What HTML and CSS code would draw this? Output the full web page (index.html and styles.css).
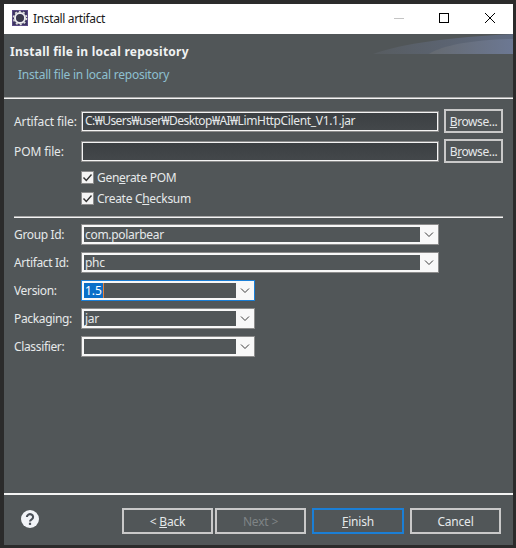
FILE: index.html
```html
<!DOCTYPE html>
<html lang="en">
<head>
    <meta charset="UTF-8">
    <meta name="viewport" content="width=device-width, initial-scale=1.0">
    <title>Install artifact</title>
    <link rel="stylesheet" href="styles.css">
</head>
<body>

    <div class="window">
        <div class="titlebar">
            <svg class="app-icon" width="16" height="16" viewBox="0 0 16 16">
                <rect width="16" height="16" fill="#5b4a86"/>
                <rect x="1" y="1" width="14" height="14" fill="#3c3560"/>
                <circle cx="8" cy="8" r="5" fill="none" stroke="#eeeeee" stroke-width="2"/>
                <circle cx="8" cy="8" r="6.5" fill="none" stroke="#dddddd" stroke-width="1.6" stroke-dasharray="2 2.1"/>
                <circle cx="8" cy="8" r="3.6" fill="#3a3a4a"/>
            </svg>
            <span class="title">Install artifact</span>
            <div class="win-controls">
                <svg width="46" height="30" viewBox="0 0 46 30"><path d="M19 15.500h10" stroke="#c4c4c4" fill="none"/></svg>
                <svg width="46" height="30" viewBox="0 0 46 30"><rect x="18.500" y="10.500" width="9" height="9" stroke="#000" fill="none"/></svg>
                <svg width="46" height="30" viewBox="0 0 46 30"><path d="M18 10l10 10M28 10l-10 10" stroke="#000" fill="none"/></svg>
            </div>
        </div>

        <div class="banner">
            <svg class="banner-art" width="140" height="20" viewBox="0 0 140 20">
                <defs>
                    <linearGradient id="fade1" x1="0" x2="1" y1="0" y2="0">
                        <stop offset="0" stop-color="#575c60"/>
                        <stop offset="1" stop-color="#5f6a80"/>
                    </linearGradient>
                    <linearGradient id="fade2" x1="0" x2="1" y1="0" y2="0">
                        <stop offset="0" stop-color="#656a70"/>
                        <stop offset="1" stop-color="#6c7893"/>
                    </linearGradient>
                </defs>
                <path d="M0 20C30 9 80 3 140 0V20Z" fill="url(#fade1)"/>
                <path d="M56 20C70 11 100 6 140 5V20Z" fill="url(#fade2)"/>
            </svg>
            <h1>Install file in local repository</h1>
            <p>Install file in local repository</p>
        </div>
        <div class="rule"></div>

        <div class="form">
            <div class="file-rows">
                <label>Artifact file:</label>
                <div class="input"><span class="file-dir">C:₩Users₩user₩Desktop₩AI₩</span><span class="file-name">LimHttpCilent_V1.1.jar</span></div>
                <div class="btn btn-browse"><span><u>B</u>rowse...</span></div>
                <label>POM file:</label>
                <div class="input"></div>
                <div class="btn btn-browse"><span>B<u>r</u>owse...</span></div>
            </div>

            <div class="checks">
                <div class="check">
                    <svg class="box" width="13" height="13" viewBox="0 0 13 13">
                        <rect x="0.500" y="0.500" width="12" height="12" fill="#f4f4f4" stroke="#8c8c8c"/>
                        <path d="M2.500 6.500l2.800 3 5.200-6" fill="none" stroke="#333" stroke-width="1.400"/>
                    </svg>
                    <span>Gen<u>e</u>rate POM</span>
                </div>
                <div class="check">
                    <svg class="box" width="13" height="13" viewBox="0 0 13 13">
                        <rect x="0.500" y="0.500" width="12" height="12" fill="#f4f4f4" stroke="#8c8c8c"/>
                        <path d="M2.500 6.500l2.800 3 5.200-6" fill="none" stroke="#333" stroke-width="1.400"/>
                    </svg>
                    <span>Create C<u>h</u>ecksum</span>
                </div>
            </div>

            <div class="rule rule-mid"></div>

            <div class="combo-rows">
                <label>Group Id:</label>
                <div class="combo combo-wide">
                    <span class="combo-text">com.polarbear</span>
                    <svg class="chevron" width="18" height="15" viewBox="0 0 18 15"><path d="M5 5.500l4 4 4-4" fill="none" stroke="#3c3c3c"/></svg>
                </div>
                <label>Artifact Id:</label>
                <div class="combo combo-wide">
                    <span class="combo-text">phc</span>
                    <svg class="chevron" width="18" height="15" viewBox="0 0 18 15"><path d="M5 5.500l4 4 4-4" fill="none" stroke="#3c3c3c"/></svg>
                </div>
                <label>Version:</label>
                <div class="combo combo-focus">
                    <span class="combo-text"><span class="selected">1.5</span></span>
                    <svg class="chevron" width="18" height="15" viewBox="0 0 18 15"><path d="M5 5.500l4 4 4-4" fill="none" stroke="#3c3c3c"/></svg>
                </div>
                <label>Packaging:</label>
                <div class="combo">
                    <span class="combo-text">jar</span>
                    <svg class="chevron" width="18" height="15" viewBox="0 0 18 15"><path d="M5 5.500l4 4 4-4" fill="none" stroke="#3c3c3c"/></svg>
                </div>
                <label>Classifier:</label>
                <div class="combo">
                    <span class="combo-text"></span>
                    <svg class="chevron" width="18" height="15" viewBox="0 0 18 15"><path d="M5 5.500l4 4 4-4" fill="none" stroke="#3c3c3c"/></svg>
                </div>
            </div>
        </div>

        <div class="rule rule-bottom"></div>

        <div class="footer">
            <svg class="help" width="18" height="18" viewBox="0 0 18 18">
                <circle cx="9" cy="9" r="9" fill="#f2f4f8"/>
                <path d="M5.900 7a3.100 2.800 0 1 1 4.800 2.300c-1.100.7-1.700 1.200-1.700 2.200" fill="none" stroke="#4a5058" stroke-width="2.100"/>
                <rect x="7.900" y="12.700" width="2.200" height="2.200" fill="#4a5058"/>
            </svg>
            <div class="buttons">
                <div class="btn btn-nav"><span>&lt; <u>B</u>ack</span></div>
                <div class="btn btn-nav btn-disabled"><span>Next &gt;</span></div>
                <div class="btn btn-nav btn-default"><span><u>F</u>inish</span></div>
                <div class="btn btn-nav"><span>Cancel</span></div>
            </div>
        </div>
    </div>

</body>
</html>
```

FILE: styles.css
```css
html, body {
    margin: 0;
    height: 548px;
    overflow: hidden;
}
body {
    background-color: #2b2b2b;
    font-family: "Noto Sans", "Open Sans", sans-serif;
    font-size: 12px;
    color: #e6e9ea;
}
.window {
    box-sizing: border-box;
    width: 509px;
    height: 541px;
    margin: 4px 0 0 4px;
    background-color: #515658;
    display: flex;
    flex-direction: column;
}
.titlebar {
    box-sizing: border-box;
    height: 30px;
    padding-bottom: 2px;
    flex: none;
    background-color: #ffffff;
    color: #1a1a1a;
    display: flex;
    align-items: center;
}
.app-icon {
    margin-left: 8px;
}
.title {
    margin-left: 5px;
    letter-spacing: -0.35px;
}
.win-controls {
    margin-left: auto;
    display: flex;
}
.banner {
    position: relative;
    height: 63px;
    flex: none;
    box-sizing: border-box;
    padding: 9px 0 0 6px;
}
.banner h1 {
    margin: 0;
    font-size: 12px;
    line-height: 17px;
    font-weight: bold;
    letter-spacing: 0.25px;
    color: #f0f2f2;
}
.banner p {
    margin: 6px 0 0 8px;
    line-height: 17px;
    letter-spacing: -0.22px;
    color: #8ec0d0;
}
.banner-art {
    position: absolute;
    top: 0;
    right: 0;
}
.rule {
    flex: none;
    height: 1px;
    background-color: #f4f4f4;
    border-top: 1px solid #a8a8a8;
}
.form {
    flex: 1;
    padding: 10px 10px 0 10px;
}
.file-rows {
    display: grid;
    grid-template-columns: 67px 358px 59px;
    grid-auto-rows: 24px;
    row-gap: 6px;
    align-items: center;
}
.file-rows label {
    letter-spacing: -0.12px;
}
.input {
    box-sizing: border-box;
    width: 358px;
    height: 21px;
    margin-top: 1px;
    padding: 0 3px;
    line-height: 17px;
    border: 1px solid #f4f4f4;
    outline: 1px solid #8c8c8c;
    outline-offset: -1px;
    box-shadow: inset 0 0 0 1px #f4f4f4;
    background: linear-gradient(#3b3f42, #44484b);
    white-space: nowrap;
    overflow: hidden;
}
.file-dir {
    letter-spacing: -0.55px;
}
.file-name {
    letter-spacing: -0.35px;
}
.btn {
    box-sizing: border-box;
    display: flex;
    align-items: center;
    justify-content: center;
    border: 2px solid #c9c9c9;
}
.btn span {
    white-space: pre;
}
.btn-browse {
    width: 59px;
    height: 24px;
    margin-left: 5px;
    letter-spacing: -0.4px;
}
.checks {
    margin: 8px 0 0 67px;
    display: flex;
    flex-direction: column;
    gap: 8px;
}
.check {
    display: flex;
    align-items: center;
    gap: 3px;
    height: 13px;
    letter-spacing: -0.3px;
}
.rule-mid {
    margin-top: 11px;
    width: 489px;
}
.combo-rows {
    margin-top: 6px;
    display: grid;
    grid-template-columns: 67px auto;
    grid-auto-rows: 21px;
    row-gap: 7px;
    align-items: center;
    justify-items: start;
}
.combo-rows label {
    letter-spacing: -0.35px;
}
.combo {
    box-sizing: border-box;
    width: 174px;
    height: 21px;
    display: flex;
    border: 3px solid #f8f8f8;
    border-right-width: 1px;
    background-color: #f8f8f8;
    outline: 1px solid #8c8c8c;
    outline-offset: -1px;
}
.combo-wide {
    width: 358px;
}
.combo-focus {
    outline-color: #1b7fd6;
}
.combo-text {
    flex: 1;
    background-color: #515658;
    padding: 0 1px;
    line-height: 15px;
    letter-spacing: -0.3px;
    white-space: nowrap;
}
.selected {
    display: inline-block;
    margin-left: -1px;
    padding: 0 1px;
    height: 15px;
    background-color: #0a6fc8;
    color: #ffffff;
    letter-spacing: 0;
    border-right: 1px solid #e8813a;
}
.chevron {
    flex: none;
    display: block;
}
.rule-bottom {
    height: 2px;
    border-top: 0;
}
.footer {
    height: 50px;
    flex: none;
    display: flex;
    align-items: flex-start;
}
.help {
    margin: 15px 0 0 17px;
}
.buttons {
    display: flex;
    margin: 13px 0 0 83px;
    letter-spacing: -0.2px;
}
.btn-nav {
    width: 91px;
    height: 26px;
    margin-right: 2px;
}
.btn-disabled {
    color: #7f8486;
    margin-right: 6px;
}
.btn-default {
    border-color: #1b7fd6;
    width: 92px;
    margin-right: 6px;
}
label {
    white-space: nowrap;
}
u {
    text-underline-offset: 1px;
}
```
